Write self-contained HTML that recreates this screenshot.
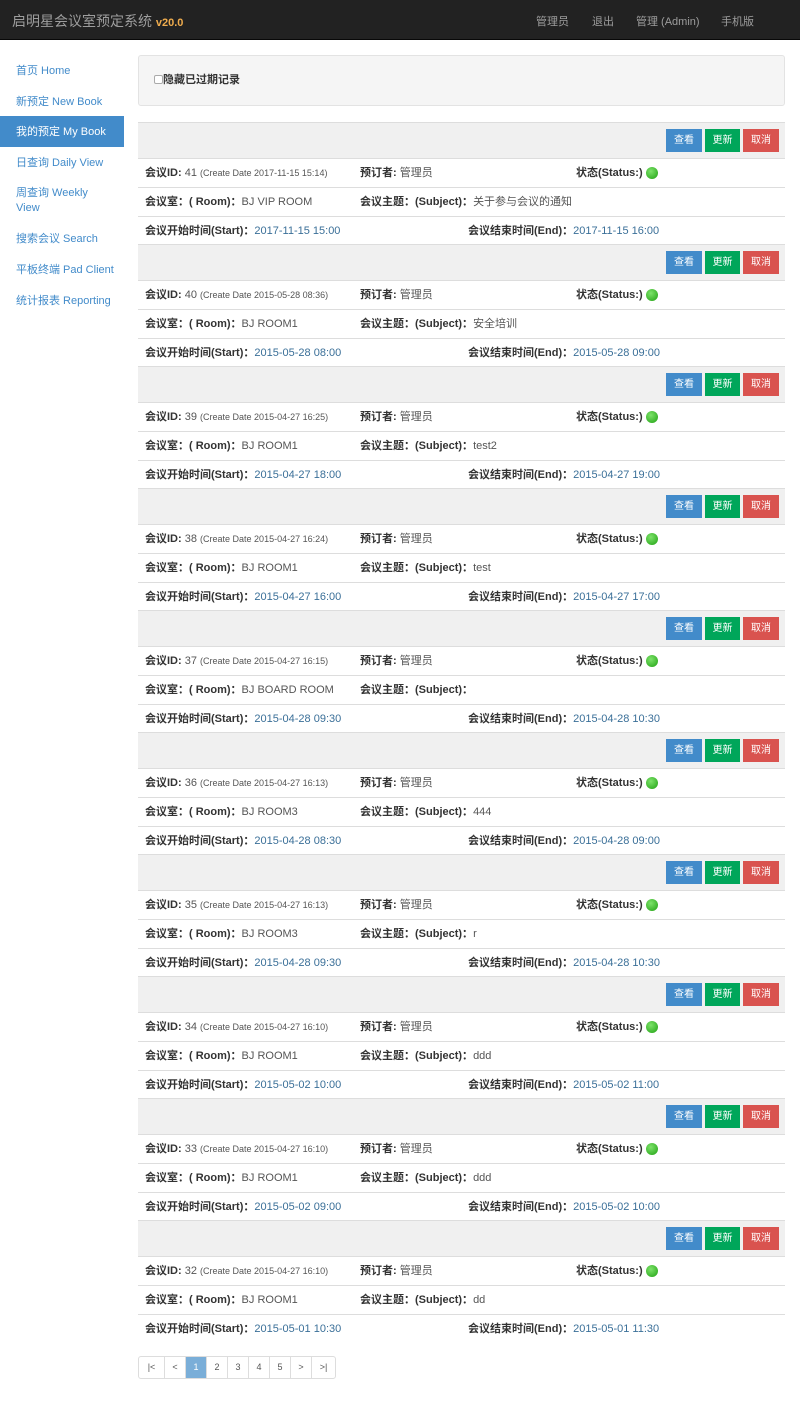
<!DOCTYPE html>
<html><head><meta charset="utf-8"><style>
*{box-sizing:border-box;margin:0;padding:0}
body{width:800px;height:1410px;background:#fff;font-family:"Liberation Sans","Noto Sans CJK SC",sans-serif;font-size:11px;color:#555;position:relative;overflow:hidden}
.nav{position:absolute;left:0;top:0;width:800px;height:40px;background:#222;border-bottom:1px solid #080808}
.brand{position:absolute;left:12px;top:11px;font-size:14px;color:#9d9d9d}
.brand b{color:#f0ad4e;font-size:11px;font-weight:bold}
.nav a{position:absolute;top:13px;color:#9d9d9d;font-size:11px}
.side{position:absolute;left:0;top:55px;width:124px}
.side div{height:30.6px;padding:9px 0 0 16px;color:#428bca;font-size:11px;line-height:15px}
.side .act{background:#428bca;color:#fff}
.side .two{height:46px}
.well{position:absolute;left:138px;top:55px;width:647px;height:51px;background:#f5f5f5;border:1px solid #e3e3e3;border-radius:3px;padding:15px 0 0 15px;font-weight:bold;color:#333}
.well i{display:inline-block;width:9px;height:9px;border:1px solid #aaa;border-radius:2px;background:#fff;vertical-align:-1px}
.list{position:absolute;left:138px;top:122px;width:647px}
.hd{height:36px;background:#f0f0f0;border-top:1px solid #ddd;position:relative}
.btn{position:absolute;top:6px;width:36px;height:23px;color:#fff;font-size:10px;text-align:center;line-height:23px}
.b1{left:528px;background:#428bca}.b2{left:567px;background:#00a65a;width:35px}.b3{left:605px;background:#d9534f}
.r{height:29px;border-top:1px solid #ddd;position:relative;line-height:28px;white-space:nowrap}
.r.l{height:28px}
.r span{position:absolute;top:0}
.c1{left:7px}.c2{left:222px}.c3{left:438px}.c4{left:330px}
b{font-weight:bold;color:#333}
.sm{font-size:9px}
.t{color:#3a6f98}
.dot{display:inline-block;width:12px;height:12px;border-radius:50%;background:radial-gradient(circle at 40% 35%,#7de36a,#1fa012);vertical-align:-3px;margin-left:3px}
.pg{position:absolute;left:138px;top:1356px;height:23px;display:flex;border:1px solid #ddd;border-radius:3px}
.pg div{width:21px;border-left:1px solid #ddd;text-align:center;line-height:21px;font-size:9px;color:#555}
.pg div:first-child{border-left:none;width:25px}
.pg div:last-child{width:24px}
.pg .a{background:#7aaed8;color:#fff}
</style></head><body>
<div class="nav"><div class="brand">启明星会议室预定系统 <b>v20.0</b></div>
<a style="left:536px">管理员</a><a style="left:592px">退出</a><a style="left:636px">管理 (Admin)</a><a style="left:721px">手机版</a></div>
<div class="side">
<div>首页 Home</div><div>新预定 New Book</div><div class="act">我的预定 My Book</div><div>日查询 Daily View</div><div class="two">周查询 Weekly<br>View</div><div>搜索会议 Search</div><div>平板终端 Pad Client</div><div>统计报表 Reporting</div>
</div>
<div class="well"><i></i>隐藏已过期记录</div>
<div class="list">
<div class="hd"><span class="btn b1">查看</span><span class="btn b2">更新</span><span class="btn b3">取消</span></div>
<div class="r"><span class="c1"><b>会议ID:</b> 41 <span class="sm" style="position:static">(Create Date 2017-11-15 15:14)</span></span><span class="c2"><b>预订者:</b> 管理员</span><span class="c3"><b>状态(Status:)</b><i class="dot"></i></span></div>
<div class="r"><span class="c1"><b>会议室：( Room)：</b>BJ VIP ROOM</span><span class="c2"><b>会议主题：(Subject)：</b>关于参与会议的通知</span></div>
<div class="r l"><span class="c1"><b>会议开始时间(Start)：</b><span class="t" style="position:static">2017-11-15 15:00</span></span><span class="c4"><b>会议结束时间(End)：</b><span class="t" style="position:static">2017-11-15 16:00</span></span></div>

<div class="hd"><span class="btn b1">查看</span><span class="btn b2">更新</span><span class="btn b3">取消</span></div>
<div class="r"><span class="c1"><b>会议ID:</b> 40 <span class="sm" style="position:static">(Create Date 2015-05-28 08:36)</span></span><span class="c2"><b>预订者:</b> 管理员</span><span class="c3"><b>状态(Status:)</b><i class="dot"></i></span></div>
<div class="r"><span class="c1"><b>会议室：( Room)：</b>BJ ROOM1</span><span class="c2"><b>会议主题：(Subject)：</b>安全培训</span></div>
<div class="r l"><span class="c1"><b>会议开始时间(Start)：</b><span class="t" style="position:static">2015-05-28 08:00</span></span><span class="c4"><b>会议结束时间(End)：</b><span class="t" style="position:static">2015-05-28 09:00</span></span></div>

<div class="hd"><span class="btn b1">查看</span><span class="btn b2">更新</span><span class="btn b3">取消</span></div>
<div class="r"><span class="c1"><b>会议ID:</b> 39 <span class="sm" style="position:static">(Create Date 2015-04-27 16:25)</span></span><span class="c2"><b>预订者:</b> 管理员</span><span class="c3"><b>状态(Status:)</b><i class="dot"></i></span></div>
<div class="r"><span class="c1"><b>会议室：( Room)：</b>BJ ROOM1</span><span class="c2"><b>会议主题：(Subject)：</b>test2</span></div>
<div class="r l"><span class="c1"><b>会议开始时间(Start)：</b><span class="t" style="position:static">2015-04-27 18:00</span></span><span class="c4"><b>会议结束时间(End)：</b><span class="t" style="position:static">2015-04-27 19:00</span></span></div>

<div class="hd"><span class="btn b1">查看</span><span class="btn b2">更新</span><span class="btn b3">取消</span></div>
<div class="r"><span class="c1"><b>会议ID:</b> 38 <span class="sm" style="position:static">(Create Date 2015-04-27 16:24)</span></span><span class="c2"><b>预订者:</b> 管理员</span><span class="c3"><b>状态(Status:)</b><i class="dot"></i></span></div>
<div class="r"><span class="c1"><b>会议室：( Room)：</b>BJ ROOM1</span><span class="c2"><b>会议主题：(Subject)：</b>test</span></div>
<div class="r l"><span class="c1"><b>会议开始时间(Start)：</b><span class="t" style="position:static">2015-04-27 16:00</span></span><span class="c4"><b>会议结束时间(End)：</b><span class="t" style="position:static">2015-04-27 17:00</span></span></div>

<div class="hd"><span class="btn b1">查看</span><span class="btn b2">更新</span><span class="btn b3">取消</span></div>
<div class="r"><span class="c1"><b>会议ID:</b> 37 <span class="sm" style="position:static">(Create Date 2015-04-27 16:15)</span></span><span class="c2"><b>预订者:</b> 管理员</span><span class="c3"><b>状态(Status:)</b><i class="dot"></i></span></div>
<div class="r"><span class="c1"><b>会议室：( Room)：</b>BJ BOARD ROOM</span><span class="c2"><b>会议主题：(Subject)：</b></span></div>
<div class="r l"><span class="c1"><b>会议开始时间(Start)：</b><span class="t" style="position:static">2015-04-28 09:30</span></span><span class="c4"><b>会议结束时间(End)：</b><span class="t" style="position:static">2015-04-28 10:30</span></span></div>

<div class="hd"><span class="btn b1">查看</span><span class="btn b2">更新</span><span class="btn b3">取消</span></div>
<div class="r"><span class="c1"><b>会议ID:</b> 36 <span class="sm" style="position:static">(Create Date 2015-04-27 16:13)</span></span><span class="c2"><b>预订者:</b> 管理员</span><span class="c3"><b>状态(Status:)</b><i class="dot"></i></span></div>
<div class="r"><span class="c1"><b>会议室：( Room)：</b>BJ ROOM3</span><span class="c2"><b>会议主题：(Subject)：</b>444</span></div>
<div class="r l"><span class="c1"><b>会议开始时间(Start)：</b><span class="t" style="position:static">2015-04-28 08:30</span></span><span class="c4"><b>会议结束时间(End)：</b><span class="t" style="position:static">2015-04-28 09:00</span></span></div>

<div class="hd"><span class="btn b1">查看</span><span class="btn b2">更新</span><span class="btn b3">取消</span></div>
<div class="r"><span class="c1"><b>会议ID:</b> 35 <span class="sm" style="position:static">(Create Date 2015-04-27 16:13)</span></span><span class="c2"><b>预订者:</b> 管理员</span><span class="c3"><b>状态(Status:)</b><i class="dot"></i></span></div>
<div class="r"><span class="c1"><b>会议室：( Room)：</b>BJ ROOM3</span><span class="c2"><b>会议主题：(Subject)：</b>r</span></div>
<div class="r l"><span class="c1"><b>会议开始时间(Start)：</b><span class="t" style="position:static">2015-04-28 09:30</span></span><span class="c4"><b>会议结束时间(End)：</b><span class="t" style="position:static">2015-04-28 10:30</span></span></div>

<div class="hd"><span class="btn b1">查看</span><span class="btn b2">更新</span><span class="btn b3">取消</span></div>
<div class="r"><span class="c1"><b>会议ID:</b> 34 <span class="sm" style="position:static">(Create Date 2015-04-27 16:10)</span></span><span class="c2"><b>预订者:</b> 管理员</span><span class="c3"><b>状态(Status:)</b><i class="dot"></i></span></div>
<div class="r"><span class="c1"><b>会议室：( Room)：</b>BJ ROOM1</span><span class="c2"><b>会议主题：(Subject)：</b>ddd</span></div>
<div class="r l"><span class="c1"><b>会议开始时间(Start)：</b><span class="t" style="position:static">2015-05-02 10:00</span></span><span class="c4"><b>会议结束时间(End)：</b><span class="t" style="position:static">2015-05-02 11:00</span></span></div>

<div class="hd"><span class="btn b1">查看</span><span class="btn b2">更新</span><span class="btn b3">取消</span></div>
<div class="r"><span class="c1"><b>会议ID:</b> 33 <span class="sm" style="position:static">(Create Date 2015-04-27 16:10)</span></span><span class="c2"><b>预订者:</b> 管理员</span><span class="c3"><b>状态(Status:)</b><i class="dot"></i></span></div>
<div class="r"><span class="c1"><b>会议室：( Room)：</b>BJ ROOM1</span><span class="c2"><b>会议主题：(Subject)：</b>ddd</span></div>
<div class="r l"><span class="c1"><b>会议开始时间(Start)：</b><span class="t" style="position:static">2015-05-02 09:00</span></span><span class="c4"><b>会议结束时间(End)：</b><span class="t" style="position:static">2015-05-02 10:00</span></span></div>

<div class="hd"><span class="btn b1">查看</span><span class="btn b2">更新</span><span class="btn b3">取消</span></div>
<div class="r"><span class="c1"><b>会议ID:</b> 32 <span class="sm" style="position:static">(Create Date 2015-04-27 16:10)</span></span><span class="c2"><b>预订者:</b> 管理员</span><span class="c3"><b>状态(Status:)</b><i class="dot"></i></span></div>
<div class="r"><span class="c1"><b>会议室：( Room)：</b>BJ ROOM1</span><span class="c2"><b>会议主题：(Subject)：</b>dd</span></div>
<div class="r l"><span class="c1"><b>会议开始时间(Start)：</b><span class="t" style="position:static">2015-05-01 10:30</span></span><span class="c4"><b>会议结束时间(End)：</b><span class="t" style="position:static">2015-05-01 11:30</span></span></div>
</div>
<div class="pg"><div>|&lt;</div><div>&lt;</div><div class="a">1</div><div>2</div><div>3</div><div>4</div><div>5</div><div>&gt;</div><div>&gt;|</div></div>
</body></html>
